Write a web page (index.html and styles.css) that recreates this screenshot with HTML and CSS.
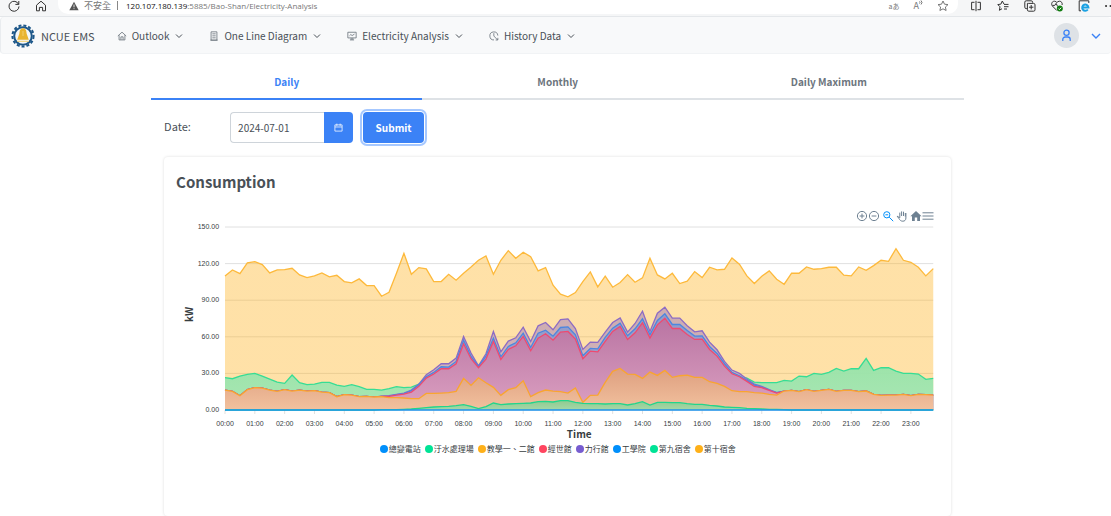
FILE: index.html
```html
<!DOCTYPE html>
<html lang="en">
<head>
<meta charset="utf-8">
<title>NCUE EMS</title>
<link rel="stylesheet" href="styles.css">
</head>
<body>
<div class="browser">
  <button class="tool" aria-label="Reload"><svg viewBox="0 0 12 12"><path d="M10.6 4.3A5 5 0 1 0 11 6.4M10.8 1v3.4H7.4"/></svg></button>
  <button class="tool" aria-label="Home"><svg viewBox="0 0 12 12"><path d="M1.5 5.2 6 1.2l4.5 4v5.6H7.6V7.4H4.4v3.4H1.5z"/></svg></button>
  <div class="address">
    <svg class="warning" viewBox="0 0 12 12"><path d="M6 .8 11.6 11H.4z"/><path class="mark" d="M6 4.2v3.4M6 8.7v1"/></svg>
    <span class="insecure">不安全</span><span class="bar"></span>
    <span class="url"><b>120.107.180.139</b>:5885/Bao-Shan/Electricity-Analysis</span>
    <span class="address-tools">
      <button class="mini" aria-label="Translate">aあ</button>
      <button class="mini large" aria-label="Read aloud">A<svg viewBox="0 0 4 8"><path d="M.5 1.5q1 1 0 2M2 .5q2 2 0 4"/></svg></button>
      <button class="tool" aria-label="Favourite"><svg viewBox="0 0 12 12"><path d="m6 1 1.5 3.2 3.5.4-2.6 2.4.7 3.5L6 8.8l-3.1 1.7.7-3.5L1 4.6l3.5-.4z"/></svg></button>
    </span>
  </div>
  <div class="extensions">
    <button class="tool" aria-label="Split screen"><svg viewBox="0 0 12 12"><path d="M4.5 2.3H1.6v7.4h2.9M7.5 2.3h2.9v7.4H7.5M6 .8v10.4"/></svg></button>
    <button class="tool" aria-label="Favourites"><svg viewBox="0 0 12 12"><path d="M7 4.1 5.3 1 3.9 4.1.8 4.6 3 6.8l-.6 3.5L5 8.7M7 4.4h4.5M7 6.7h4.5M7 9h3"/></svg></button>
    <button class="tool" aria-label="Collections"><svg viewBox="0 0 12 12"><path d="M3 8.6H2.2A1.4 1.4 0 0 1 .8 7.2v-5A1.4 1.4 0 0 1 2.2.8h5a1.4 1.4 0 0 1 1.4 1.4v.6M4.4 3.4h5.2a1.4 1.4 0 0 1 1.4 1.4v5a1.4 1.4 0 0 1-1.4 1.4H4.8a1.4 1.4 0 0 1-1.4-1.4V3.4zM7.2 5v4.4M5 7.2h4.4"/></svg></button>
    <button class="tool" aria-label="Performance"><svg viewBox="0 0 12 12"><path d="M5.8 10.5 1.4 6C-.3 3.7 1.2 1.2 3.4 1.2c1.2 0 2 .7 2.5 1.4.5-.7 1.3-1.4 2.5-1.4 2.2 0 3.2 2 2.7 3.8M1.5 5.4h2.3l1.3-2 1.5 3"/><circle class="ok" cx="8.8" cy="8.6" r="3"/><path class="tick" d="m7.4 8.6 1 1 1.8-1.9"/></svg></button>
    <button class="tool" aria-label="IE mode"><svg viewBox="0 0 12 12"><path d="M3 10.8H1.2V.8h9.6V3"/><path class="ie" d="M4.2 7.4h6.2A3.1 3.1 0 1 0 9.8 9.5"/></svg></button>
    <button class="tool" aria-label="More"><svg viewBox="0 0 12 12"><path class="dots" d="M1 6h.1M5.5 6h.1M10 6h.1"/></svg></button>
  </div>
</div>

<header class="navbar">
  <a class="brand" href="#">
    <svg class="logo" viewBox="0 0 24 24"><circle class="teeth" cx="12" cy="12" r="10.6"/><circle class="gear" cx="12" cy="12" r="8.8"/><path class="bell" d="M12 4.2c-2.6 0-3.5 2.4-3.6 5.3L6.2 15.8h11.6L15.6 9.5C15.5 6.6 14.6 4.2 12 4.2z"/><path class="base" d="M6.2 17.3h11.6M12 7v5"/></svg>
    NCUE EMS
  </a>
  <nav class="menu">
    <a href="#"><svg class="icon" viewBox="0 0 12 12"><path d="M1 6 6 1.4 11 6M2.5 5v5.7h7V5M4.7 10.5V7h2.6v3.5"/></svg>Outlook<svg class="chev" viewBox="0 0 8 8"><path d="m1 2.5 3 3 3-3"/></svg></a>
    <a href="#"><svg class="icon" viewBox="0 0 12 12"><path d="M2.5 1h7v10h-7zM1.5 11h9M4 3.4h4M4 5.8h4M4 8.2h4"/></svg>One Line Diagram<svg class="chev" viewBox="0 0 8 8"><path d="m1 2.5 3 3 3-3"/></svg></a>
    <a href="#"><svg class="icon" viewBox="0 0 12 12"><path d="M1 1.5h10v6.8H1zM3.5 10.7h5M5 8.3v2.4M7 8.3v2.4M3 5.7l1.6-1.5 1.5 1.3L9 3.7"/></svg>Electricity Analysis<svg class="chev" viewBox="0 0 8 8"><path d="m1 2.5 3 3 3-3"/></svg></a>
    <a href="#"><svg class="icon" viewBox="0 0 12 12"><path d="M10.6 5.5A4.8 4.8 0 1 0 6 10.7M5.8 2.6V6l4.6 4.8M8 10.8h2.6V8.2"/></svg>History Data<svg class="chev" viewBox="0 0 8 8"><path d="m1 2.5 3 3 3-3"/></svg></a>
  </nav>
  <button class="account" aria-label="Account">
    <span class="avatar"><svg viewBox="0 0 14 14"><circle cx="7" cy="4" r="2.8"/><path d="M3 13v-1.8A2.6 2.6 0 0 1 5.6 8.6h2.8a2.6 2.6 0 0 1 2.6 2.6V13"/></svg></span>
    <svg class="caret" viewBox="0 0 10 10"><path d="m1 3 4 4 4-4"/></svg>
  </button>
</header>

<main class="page">
  <div class="tabs" role="tablist">
    <button class="tab active" role="tab" aria-selected="true">Daily</button>
    <button class="tab" role="tab" aria-selected="false">Monthly</button>
    <button class="tab" role="tab" aria-selected="false">Daily Maximum</button>
  </div>
  <div class="panel">
    <form class="filter">
      <label for="date">Date:</label>
      <div class="date">
        <input id="date" type="text" value="2024-07-01">
        <button type="button" aria-label="Choose date"><svg viewBox="0 0 12 12"><path d="M1.2 2.5h9.6v8.3H1.2zM1.2 5.3h9.6M3.8.8v3M8.2.8v3"/></svg></button>
      </div>
      <button class="submit" type="button">Submit</button>
    </form>
    <section class="card">
      <h1>Consumption</h1>
      <div class="chart-tools">
        <button aria-label="Zoom in"><svg viewBox="0 0 12 12"><circle cx="6" cy="6" r="4.6"/><path d="M6 3.6v4.8M3.6 6h4.8"/></svg></button>
        <button aria-label="Zoom out"><svg viewBox="0 0 12 12"><circle cx="6" cy="6" r="4.6"/><path d="M3.6 6h4.8"/></svg></button>
        <button class="selected" aria-label="Selection zoom"><svg viewBox="0 0 12 12"><circle cx="4.8" cy="4.8" r="3.1"/><path d="m7.2 7.2 4 4M3.4 4.8h2.8"/></svg></button>
        <button aria-label="Pan"><svg viewBox="0 0 12 12"><path d="M3.8 7.8V2.6M5.6 6V1.4M7.5 6V1.7M9.3 6.5V3M9.9 3v5c0 2-1.2 3.2-3 3.2-2 0-3-1-4-2.7L1.2 6.2l2.6 1.6"/></svg></button>
        <button aria-label="Reset zoom"><svg viewBox="0 0 12 12"><path class="solid" d="M6 1 .4 6.2H2V11h2.8V7.6h2.4V11H10V6.2h1.6z"/></svg></button>
        <button aria-label="Menu"><svg viewBox="0 0 12 12"><path d="M.5 2.8h11M.5 6h11M.5 9.2h11"/></svg></button>
      </div>
      <div class="chart">
        <div class="y-title">kW</div>
        <div class="y-axis"><span>150.00</span><span>120.00</span><span>90.00</span><span>60.00</span><span>30.00</span><span>0.00</span></div>
        <svg class="plot" id="plot" viewBox="0 0 95 550" preserveAspectRatio="none" role="img" aria-label="Consumption in kW over the day"></svg>
        <div class="x-axis" id="hours"></div>
        <div class="x-title">Time</div>
      </div>
      <ul class="legend">
        <li class="blue">總變電站</li><li class="green">汙水處理場</li><li class="yellow">教學一、二館</li><li class="red">經世館</li><li class="purple">力行館</li><li class="blue">工學院</li><li class="green">第九宿舍</li><li class="yellow">第十宿舍</li>
      </ul>
    </section>
  </div>
</main>
<script src="chart.js"></script>
</body>
</html>
```
FILE: styles.css
```css
* { box-sizing: border-box; }
body {
  margin: 0; height: 100vh; overflow: hidden; display: flex; flex-direction: column;
  background: #fff; color: #495057; font-family: "Noto Sans CJK TC", "Noto Sans", sans-serif; font-size: 10px;
}
button { border: 0; padding: 0; background: none; font: inherit; color: inherit; }
svg { display: block; fill: none; stroke: currentColor; }
a { color: inherit; text-decoration: none; }

.browser { flex: none; display: flex; align-items: flex-start; height: 17px; padding-left: 8px; background: #f5f6f7; border-bottom: 1px solid #e4e7ea; color: #333; }
.tool { flex: none; width: 12px; height: 12px; }
.tool svg { width: 12px; height: 12px; }
.browser > .tool + .tool { margin-left: 15px; }
.address { flex: 1; display: flex; align-items: center; height: 14px; margin-left: 11px; padding: 0 9px 3px 11px; background: #fff; border-radius: 0 0 10px 10px; font-size: 8px; line-height: 12px; }
.warning { width: 10px; height: 10px; fill: #555; stroke: none; }
.warning .mark { stroke: #fff; }
.insecure { margin-left: 5px; font-size: 9px; color: #777; }
.bar { width: 1px; height: 9px; margin: 0 8px 0 6px; background: #888; }
.url { font-family: "Open Sans", sans-serif; color: #777; }
.url b { font-weight: 400; color: #111; }
.address-tools { display: flex; align-items: center; gap: 14px; margin-left: auto; color: #777; }
.mini { display: flex; font-size: 7px; line-height: 12px; }
.mini.large { font-size: 9px; }
.mini svg { width: 4px; height: 8px; }
.extensions { display: flex; gap: 15px; margin-left: 12px; width: 141px; overflow: hidden; }
.ok { fill: #107c10; stroke: none; }
.tick { stroke: #fff; }
.ie { stroke: #1ba1e2; stroke-width: 2; }
.dots { stroke-width: 2; stroke-linecap: round; }

.navbar { flex: none; display: flex; align-items: center; height: 37px; padding: 1px 10px 0; background: #f8f9fa; border-bottom: 1px solid #f1f3f5; border-left: 1px solid #e9ecef; border-radius: 4px; }
.brand { display: flex; align-items: center; gap: 6px; font-size: 11px; }
.logo { width: 24px; height: 24px; }
.teeth { stroke: #1d5789; stroke-width: 2; stroke-dasharray: 3 2; }
.gear { fill: #f3f7fa; stroke: #1d5789; stroke-width: 2; }
.bell { fill: #e9b42f; stroke: none; }
.base { stroke: #f2cf6d; stroke-width: 1; }
.menu { display: flex; gap: 26px; margin-left: 22px; }
.menu a { display: flex; align-items: center; font-weight: 400; line-height: 16px; }
.icon { width: 10px; height: 10px; margin-right: 5px; color: #6c757d; }
.chev { width: 8px; height: 8px; margin-left: 6px; }
.account { display: flex; align-items: center; gap: 12px; margin-left: auto; color: #3b82f6; }
.avatar { display: grid; place-items: center; width: 25px; height: 25px; border-radius: 50%; background: #dee2e6; }
.avatar svg { width: 13px; height: 13px; stroke-width: 1.4; }
.caret { width: 10px; height: 10px; stroke-width: 1.4; }

.page { flex: 1; display: flex; flex-direction: column; width: 73.2%; margin-left: 13.6%; padding-top: 10px; min-height: 0; }
.tabs { display: grid; grid-template-columns: repeat(3, 1fr); }
.tab { height: 36px; border-bottom: 2px solid #dee2e6; font-weight: 700; color: #6c757d; }
.tab.active { color: #3b82f6; border-color: #3b82f6; }
.panel { flex: 1; display: flex; flex-direction: column; padding: 12px 13px 0; min-height: 0; }
.filter { display: flex; height: 31px; margin-bottom: 14px; }
.filter label { width: 66px; padding-top: 4px; font-size: 11px; line-height: 20px; font-weight: 400; }
.date { display: flex; width: 123px; }
.date input { width: 94px; border: 1px solid #ced4da; border-right: 0; border-radius: 4px 0 0 4px; padding: 0 7px; font: inherit; color: #495057; }
.date button { width: 29px; display: grid; place-items: center; background: #3b82f6; color: #fff; border-radius: 0 4px 4px 0; }
.date svg { width: 9px; height: 9px; }
.submit { width: 61px; margin-left: 10px; background: #3b82f6; color: #fff; font-weight: 700; border-radius: 4px; box-shadow: 0 0 0 1px #fff, 0 0 0 3px #a6c8ff; }
.card { flex: 1; padding: 12px; border-radius: 4px; box-shadow: 0 0 3px rgba(0, 0, 0, .14); min-height: 0; }
.card h1 { margin: 0; font-size: 15px; line-height: 25px; font-weight: 700; }
.chart-tools { display: flex; justify-content: flex-end; margin: 16px 5px 5px 0; color: #6e8192; }
.chart-tools button:nth-child(n+3) { margin-left: 2px; }
.chart-tools button:last-child { margin-left: 0; }
.chart-tools svg { width: 12px; height: 12px; }
.chart-tools .selected { color: #008ffb; }
.solid { fill: currentColor; stroke: none; }

.chart { display: grid; grid-template-columns: 22px 21px 1fr; grid-template-rows: 183px 18px 12px; column-gap: 3px; padding-right: 6px; font-family: "Liberation Sans", Arial, sans-serif; font-size: 7px; color: #373d3f; }
.y-title { justify-self: end; writing-mode: vertical-rl; transform: rotate(180deg); text-align: center; font: 700 10px/18px "Noto Sans CJK TC", sans-serif; padding-top: 8px; }
.y-axis { display: flex; flex-direction: column; align-items: flex-end; justify-content: space-between; padding-right: 3px; }
.y-axis span { height: 0; line-height: 0; }
.plot { width: 100%; height: 100%; overflow: visible; }
.plot * { vector-effect: non-scaling-stroke; }
.x-axis { grid-column: 3; display: flex; justify-content: space-between; width: 96.84%; line-height: 27px; }
.x-axis span { width: 0; display: flex; justify-content: center; }
.x-title { grid-column: 3; text-align: center; font: 700 10px/12px "Noto Sans CJK TC", sans-serif; }
.legend { display: flex; justify-content: center; gap: 4px; margin: 3px 0 0; padding: 0; list-style: none; font-size: 8px; line-height: 12px; color: #373d3f; }
.legend li { display: flex; align-items: center; gap: 1px; }
.legend li::before { content: ""; width: 8px; height: 8px; border-radius: 50%; background: var(--dot); }
.blue { --dot: #008ffb; }
.green { --dot: #00e396; }
.yellow { --dot: #feb019; }
.red { --dot: #ff4560; }
.purple { --dot: #775dd0; }
```
FILE: chart.js
```js
// Quarter-hour readings as distance from the chart top; 586 is 0 kW and 36 is 150 kW.
const TOP = 36, ZERO = 586;
const fill = (n, v) => Array(n).fill(v);

const dormTen = [183,165,176,144,140,149,174,165,164,160,180,188,183,174,186,181,200,204,192,212,212,244,232,175,
  115,178,158,162,200,200,178,196,175,156,136,123,178,136,107,130,112,125,168,158,211,238,246,233,
  200,171,216,184,217,203,179,202,189,130,180,192,175,206,199,170,188,157,165,163,129,148,183,206,
  184,168,193,208,175,175,156,163,161,157,157,181,183,156,166,152,136,139,101,136,142,157,183,161];
const dormNine = [489,492,484,479,476,484,493,502,506,481,504,510,508,503,503,511,515,510,516,524,524,526,522,516,
  519,517,508,510,506,492,500,502,460,500,520,550,495,535,510,463,487,530,495,474,475,472,481,488,
  537,510,520,510,500,490,505,470,485,473,482,475,469,464,469,463,446,453,460,472,480,485,490,502,
  504,504,504,497,499,484,486,476,479,473,461,469,462,462,431,467,459,459,469,476,476,478,494,491];
const teaching = [526,530,543,525,519,520,526,530,525,529,526,529,528,532,534,546,540,541,546,545,547,546,549,549,
  550,552,552,536,536,535,534,530,491,512,489,504,518,542,525,519,498,546,534,526,529,531,535,520,
  563,542,541,503,470,461,478,479,491,472,482,467,488,483,481,488,488,501,506,515,528,531,531,534,
  535,539,541,529,527,531,525,530,527,524,530,527,527,531,529,539,542,541,541,539,543,539,540,541];
const day = values => [...teaching.slice(0, 21), ...values, ...teaching.slice(75)];
const jingshi = day([545,545,541,538,532,515,490,478,462,462,447,387,432,459,433,380,434,404,393,365,408,370,357,376,352,350,373,
  432,409,411,380,350,335,374,354,324,370,330,310,341,341,359,374,373,404,424,454,477,486,500,515,519,527,535]);
const engineering = day([545,544,540,537,528,510,486,473,456,457,440,376,425,456,424,370,426,395,384,355,398,355,346,364,338,336,360,
  423,401,402,368,340,325,363,342,312,360,317,297,329,329,347,364,363,395,416,447,473,483,497,511,517,526,534]);
const lixing = day([544,543,539,535,526,508,480,465,447,447,430,365,415,453,417,350,411,379,369,337,380,333,323,345,314,312,341,
  404,382,383,352,323,309,352,326,289,350,295,277,310,310,333,351,348,382,405,440,466,476,493,508,515,525,534]);
const sewage = [...fill(21, 586),585,585,585,584,583,581,579,577,576,575,573,570,575,582,576,565,570,568,567,566,565,561,560,562,558,558,563,
  566,567,567,568,567,567,571,567,561,571,563,563,564,564,567,569,569,572,574,577,578,579,581,582,583,584,584,585,...fill(20, 586)];
const substation = fill(96, 586);

const series = [
  [dormTen, '#fdb93b', '#feb019', '#feb019', .38],
  [dormNine, '#36dd94', '#95e3a8', '#a3e7b5', .94],
  [lixing, '#8c6bc4', '#c9a8b0', '#d5b5c0', .95],
  [engineering, '#4d86df', '#8b99cc', '#a3a9d0', .93],
  [jingshi, '#ee4a70', '#bc719f', '#df9fc0', .93],
  [teaching, '#f9a52f', '#dfa07d', '#f3c39c', .95],
  [sewage, '#22d58b', '#8dcb90', '#a2d9a8', .96],
  [substation, '#1d93ec', '#9cd3f5', '#9cd3f5', 1]
];

let svg = '<defs>';
series.forEach((s, i) => {
  svg += `<linearGradient id="g${i}" x1="0" y1="0" x2="0" y2="1"><stop offset="0" stop-color="${s[2]}"/><stop offset="1" stop-color="${s[3]}"/></linearGradient>`;
});
svg += '</defs>';
for (let y = 0; y <= 550; y += 110) svg += `<path d="M0 ${y}H95" stroke="#e0e0e0"/>`;
for (let x = 0; x < 95; x += 4) svg += `<path d="M${x} 550v12" stroke="#e0e0e0"/>`;
series.forEach(([data, line, , , opacity], i) => {
  const points = data.map((y, x) => `${x} ${y - TOP}`).join('L');
  svg += `<path d="M${points}V${ZERO - TOP}H0Z" fill="url(#g${i})" fill-opacity="${opacity}" stroke="none"/>`;
  svg += `<path d="M${points}" stroke="${line}" stroke-width="1.3"/>`;
});
document.getElementById('plot').innerHTML = svg;

document.getElementById('hours').innerHTML =
  Array.from({ length: 24 }, (_, h) => `<span>${String(h).padStart(2, '0')}:00</span>`).join('');
```
